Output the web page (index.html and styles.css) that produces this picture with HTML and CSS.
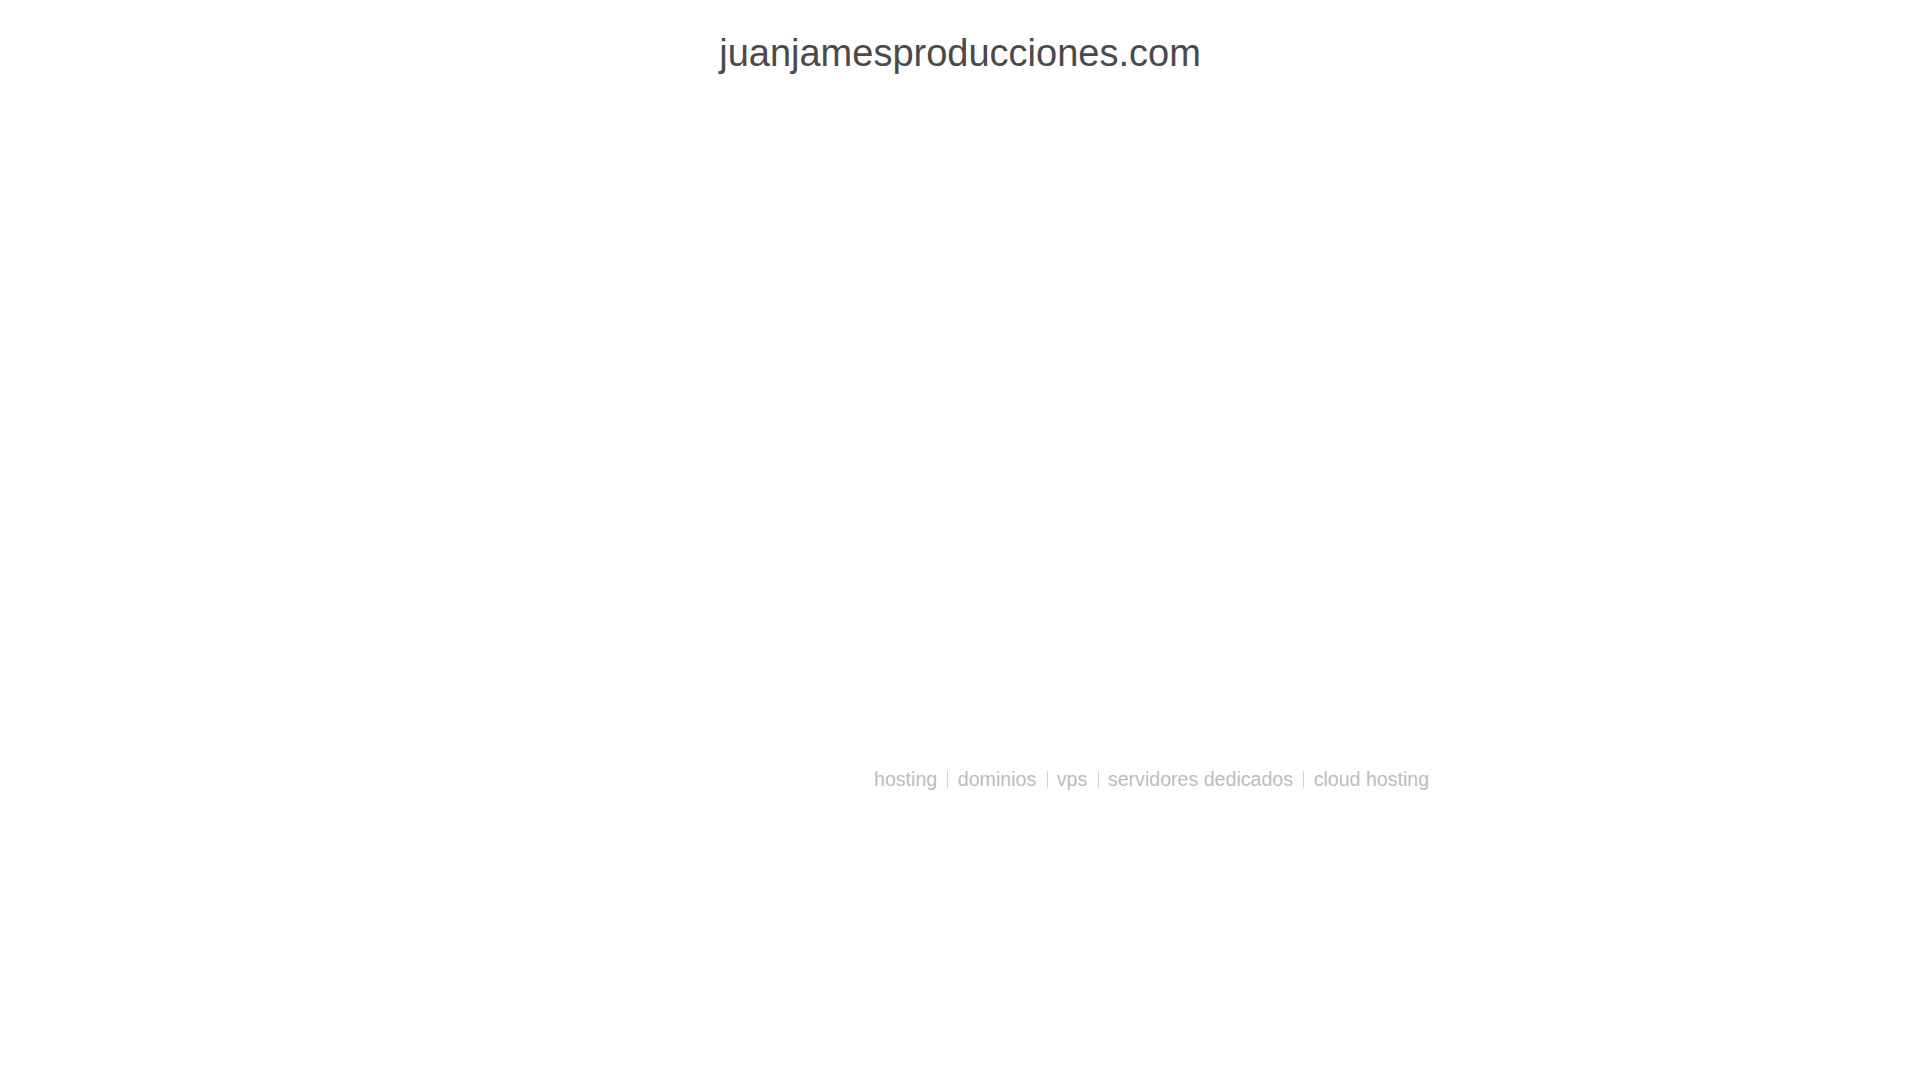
FILE: index.html
```html
<!DOCTYPE html>
<html lang="es">
<head>
<meta charset="utf-8">
<title>juanjamesproducciones.com</title>
<link rel="stylesheet" href="styles.css">
</head>
<body>
<header class="header">
  <h1 class="domain">juanjamesproducciones.com</h1>
</header>
<main class="content"></main>
<nav class="links">
  <a class="link" href="#">hosting</a>
  <span class="sep"></span>
  <a class="link" href="#">dominios</a>
  <span class="sep"></span>
  <a class="link" href="#">vps</a>
  <span class="sep"></span>
  <a class="link" href="#">servidores dedicados</a>
  <span class="sep"></span>
  <a class="link" href="#">cloud hosting</a>
</nav>
</body>
</html>
```
FILE: styles.css
```css
html, body {
  margin: 0;
  padding: 0;
  background: #ffffff;
}
body {
  font-family: "Liberation Sans", Arial, sans-serif;
}
.header {
  padding-top: 32px;
  text-align: center;
}
.domain {
  margin: 0;
  font-size: 38px;
  font-weight: normal;
  line-height: normal;
  color: #4a4a4a;
}
.content {
  height: 693px;
}
.links {
  display: flex;
  align-items: center;
  padding-left: 874px;
  font-size: 19.6px;
  line-height: normal;
}
.link {
  color: #bcbcbc;
  text-decoration: none;
}
.sep {
  display: block;
  width: 0;
  height: 17px;
  border-left: 1px solid #d4d4d4;
  margin: 0 9.3px 0 10.3px;
}
```
